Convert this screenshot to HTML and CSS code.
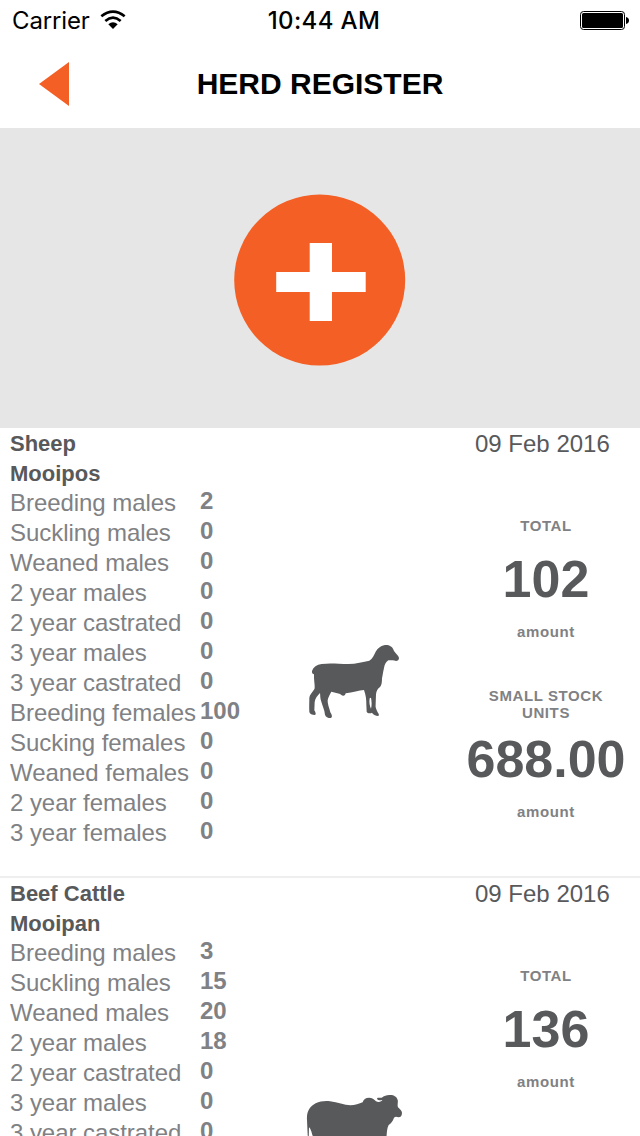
FILE: index.html
```html
<!DOCTYPE html>
<html lang="en">
<head>
<meta charset="utf-8">
<title>Herd Register</title>
<link rel="stylesheet" href="styles.css">
</head>
<body>
<div class="screen">
  <header class="status">
    <div class="status-left">
      <span class="carrier">Carrier</span>
      <svg class="wifi" width="26" height="20" viewBox="0 0 78 60">
        <g fill="none" stroke="#000" stroke-width="8">
          <path d="M4 19Q39 -9 74 19"/>
          <path d="M16 33Q39 13 62 33"/>
        </g>
        <path d="M25 43Q39 31 53 43L39 57Z"/>
      </svg>
    </div>
    <span class="time">10:44 AM</span>
    <svg class="battery" width="50" height="20" viewBox="0 0 50 20">
      <rect x=".5" y=".5" width="44" height="18" rx="3" fill="none" stroke="#000"/>
      <rect x="2" y="2" width="41" height="15" rx="1.5"/>
      <path d="M46 6q3 .8 3 3.500t-3 3.500z"/>
    </svg>
  </header>
  <nav class="nav">
    <svg class="back" width="30" height="44" viewBox="0 0 30 44"><path d="M30 0V44L0 22Z"/></svg>
    <h1 class="title">HERD REGISTER</h1>
  </nav>
  <section class="add">
    <svg width="172" height="172" viewBox="0 0 172 172">
      <circle class="add-disc" cx="85.700" cy="86.100" r="85.500"/>
      <path class="add-plus" d="M75.700 49H98V78H131.700V98H98V127H75.700V98H42.200V78H75.700Z"/>
    </svg>
  </section>
  <main>
    <article class="card">
      <div class="breakdown">
        <h2 class="name">Sheep</h2>
        <h2 class="name">Mooipos</h2>
        <div class="row"><span class="label">Breeding males</span><b class="count">2</b></div>
        <div class="row"><span class="label">Suckling males</span><b class="count">0</b></div>
        <div class="row"><span class="label">Weaned males</span><b class="count">0</b></div>
        <div class="row"><span class="label">2 year males</span><b class="count">0</b></div>
        <div class="row"><span class="label">2 year castrated</span><b class="count">0</b></div>
        <div class="row"><span class="label">3 year males</span><b class="count">0</b></div>
        <div class="row"><span class="label">3 year castrated</span><b class="count">0</b></div>
        <div class="row"><span class="label">Breeding females</span><b class="count">100</b></div>
        <div class="row"><span class="label">Sucking females</span><b class="count">0</b></div>
        <div class="row"><span class="label">Weaned females</span><b class="count">0</b></div>
        <div class="row"><span class="label">2 year females</span><b class="count">0</b></div>
        <div class="row"><span class="label">3 year females</span><b class="count">0</b></div>
      </div>
      <div class="picture">
        <svg class="animal sheep" width="110" height="90" viewBox="0 0 330 270">
          <path fill-rule="evenodd" d="M36 108C40 96 50 89 65 87C92 83 115 87 145 87C168 87 190 80 208 77C218 71 222 60 227 50C233 40 242 33 252 31C258 29 266 30 270 33C276 35 279 41 282 48C288 57 296 62 297 69C297 75 293 78 288 78C282 74 274 76 265 76C257 81 254 89 252 99C249 112 248 122 246 130C246 142 245 151 240 156C232 162 229 169 228 178L227 207C225 218 230 224 233 232C237 237 238 241 235 243C226 243 219 238 216 233C210 237 202 234 200 230L199 208C199 195 198 181 192 165C177 166 158 173 137 175C136 179 134 182 130 182C125 181 123 178 118 176C110 174 102 172 94 170C90 178 84 188 83 196C82 205 88 220 91 232C96 239 98 247 93 249C83 249 77 246 75 239C74 225 67 211 64 200C60 191 61 180 60 174C53 181 45 190 44 202L43 226C47 233 49 238 45 240C36 240 29 237 28 231C27 218 28 202 28 190C28 179 41 169 44 160C45 150 41 133 42 118C38 117 35 113 36 108ZM209 190C207 202 209 213 213 221C216 210 215 199 213 188Z"/>
        </svg>
      </div>
      <div class="summary">
        <time class="date">09 Feb 2016</time>
        <div class="stat">
          <span class="stat-title">TOTAL</span>
          <strong class="stat-value">102</strong>
          <span class="stat-unit">amount</span>
        </div>
        <div class="stat stat-tall">
          <span class="stat-title">SMALL STOCK<br>UNITS</span>
          <strong class="stat-value">688.00</strong>
          <span class="stat-unit">amount</span>
        </div>
      </div>
    </article>
    <article class="card">
      <div class="breakdown">
        <h2 class="name">Beef Cattle</h2>
        <h2 class="name">Mooipan</h2>
        <div class="row"><span class="label">Breeding males</span><b class="count">3</b></div>
        <div class="row"><span class="label">Suckling males</span><b class="count">15</b></div>
        <div class="row"><span class="label">Weaned males</span><b class="count">20</b></div>
        <div class="row"><span class="label">2 year males</span><b class="count">18</b></div>
        <div class="row"><span class="label">2 year castrated</span><b class="count">0</b></div>
        <div class="row"><span class="label">3 year males</span><b class="count">0</b></div>
        <div class="row"><span class="label">3 year castrated</span><b class="count">0</b></div>
      </div>
      <div class="picture">
        <svg class="animal cattle" width="120" height="90" viewBox="0 0 360 270">
          <path fill-rule="evenodd" d="M36 120C34 96 44 79 62 70C75 64 91 62 105 64C128 67 148 75 166 76C180 76 193 71 203 67C205 58 212 53 222 53C231 53 238 58 243 64C248 67 254 67 258 64C262 62 263 61 261 60C254 62 248 60 246 56C248 52 253 54 260 53C268 47 277 44 286 45C297 45 306 51 308 60C310 67 306 75 309 82C314 88 320 91 321 98C321 107 317 112 311 112C305 110 301 109 297 113C294 122 288 130 281 135C275 146 276 160 274 174L270 250H252L250 190H90L86 250H68L62 185L52 165C50 156 46 144 42 142L41 180L38 165Z"/>
        </svg>
      </div>
      <div class="summary">
        <time class="date">09 Feb 2016</time>
        <div class="stat">
          <span class="stat-title">TOTAL</span>
          <strong class="stat-value">136</strong>
          <span class="stat-unit">amount</span>
        </div>
      </div>
    </article>
  </main>
</div>
</body>
</html>
```
FILE: styles.css
```css
* { box-sizing: border-box; }
body {
  margin: 0;
  background: #fff;
  font-family: "Liberation Sans", Arial, sans-serif;
  color: #58595b;
}
.screen { width: 640px; height: 1136px; overflow: hidden; }

.status {
  display: grid;
  grid-template-columns: 1fr auto 1fr;
  align-items: center;
  height: 40px;
  padding: 2px 10px 0 12px;
  font: 24px/38px Inter, sans-serif;
  color: #000;
}
.status-left { display: flex; align-items: center; gap: 10px; }
.carrier { letter-spacing: -.15px; }
.wifi { margin-bottom: 2px; }
.time { font-weight: 500; letter-spacing: .35px; padding-left: 6px; }
.battery { justify-self: end; margin-bottom: 1px; }

.nav {
  display: grid;
  grid-template-columns: 69px 1fr 69px;
  align-items: center;
  height: 88px;
}
.back { justify-self: end; fill: #f35f24; }
.title {
  margin: 0;
  text-align: center;
  font-size: 30px;
  line-height: 34px;
  color: #000;
}

.add {
  display: flex;
  justify-content: center;
  align-items: center;
  height: 300px;
  padding-top: 4px;
  background: #e6e6e6;
}
.add-disc { fill: #f35f24; }
.add-plus { fill: #fff; }

.card {
  display: grid;
  grid-template-columns: 250px 202px 188px;
  height: 450px;
  border-bottom: 2px solid #eee;
}
.breakdown { padding-left: 10px; }
.name { margin: 0; font-size: 22px; line-height: 32px; height: 30px; }
.row {
  display: grid;
  grid-template-columns: 190px 1fr;
  height: 30px;
  font-size: 24px;
  line-height: 30px;
  color: #808184;
  white-space: nowrap;
}
.label { letter-spacing: -.05px; }
.count { line-height: 26px; }

.animal { display: block; fill: #58595b; }
.sheep { margin: 207px 0 0 50px; }
.cattle { margin: 202px 0 0 45px; }

.summary { display: flex; flex-direction: column; }
.date { padding-left: 23px; font-size: 24px; line-height: 31px; }
.stat {
  display: flex;
  flex-direction: column;
  align-items: center;
  padding-top: 58px;
  text-align: center;
}
.stat-tall { padding-top: 47px; }
.stat-title, .stat-unit {
  font-size: 15px;
  line-height: 17px;
  font-weight: bold;
  letter-spacing: .6px;
  color: #808184;
}
.stat-value { margin: 16px 0 15px; font-size: 52px; line-height: 58px; }
.stat-tall .stat-value { margin-top: 9px; }
```
